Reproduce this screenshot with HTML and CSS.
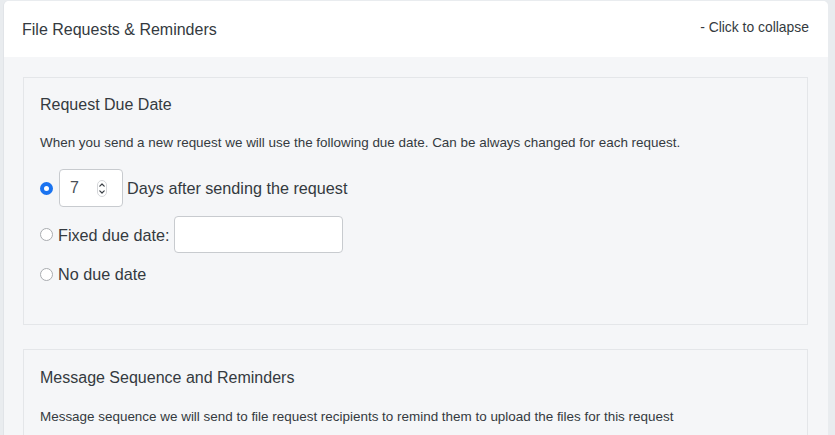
FILE: index.html
```html
<!DOCTYPE html>
<html lang="en">
<head>
    <meta charset="UTF-8">
    <meta name="viewport" content="width=device-width, initial-scale=1.0">
    <title>Settings - File Requests</title>
    <link rel="stylesheet" href="styles.css">
</head>
<body>
    <div class="card">
        <div class="card-header">
            <h2>File Requests &amp; Reminders</h2>
            <a class="collapse-link" href="#">- Click to collapse</a>
        </div>
        <div class="card-body">
            <div class="section">
                <h3>Request Due Date</h3>
                <p class="hint">When you send a new request we will use the following due date. Can be always changed for each request.</p>
                <form class="due-form">
                    <label class="option">
                        <input type="radio" name="due" checked>
                        <span class="number-box">
                            <input type="text" class="number-input" value="7">
                            <svg class="spinner" width="10" height="17" viewBox="0 0 10 17">
                                <rect x="0.5" y="0.5" width="9" height="16" rx="4.5" fill="#fff" stroke="#d4d6d9"/>
                                <path d="M2.8 6.2 L5 4 L7.2 6.2" fill="none" stroke="#3a3f45" stroke-width="1.2" stroke-linecap="round" stroke-linejoin="round"/>
                                <path d="M2.8 10.8 L5 13 L7.2 10.8" fill="none" stroke="#3a3f45" stroke-width="1.2" stroke-linecap="round" stroke-linejoin="round"/>
                            </svg>
                        </span>
                        Days after sending the request
                    </label>
                    <label class="option">
                        <input type="radio" name="due">
                        Fixed due date:
                        <input type="text" class="date-input">
                    </label>
                    <label class="option">
                        <input type="radio" name="due">
                        No due date
                    </label>
                </form>
            </div>

            <div class="section">
                <h3>Message Sequence and Reminders</h3>
                <p class="hint">Message sequence we will send to file request recipients to remind them to upload the files for this request</p>
            </div>
        </div>
    </div>
</body>
</html>
```

FILE: styles.css
```css
body {
    font-family: 'Liberation Sans', Arial, sans-serif;
    margin: 0;
    padding: 1px 7px 0 3px;
    background-color: #e9ecef;
    color: #343a40;
    overflow: hidden;
}
.card {
    background-color: #f5f6f8;
    border-radius: 5px;
    border-left: 1px solid #e1e4e8;
    min-height: 500px;
}
.card-header {
    display: flex;
    justify-content: space-between;
    align-items: center;
    height: 56px;
    padding: 0 19px 0 18px;
    background-color: #fff;
    border-radius: 5px 5px 0 0;
}
.card-header h2 {
    margin: 2px 0 0;
    font-size: 16px;
    font-weight: normal;
}
.collapse-link {
    font-size: 13.9px;
    color: #343a40;
    text-decoration: none;
    margin-bottom: 5px;
}
.card-body {
    padding: 20px 20px 0 19px;
}
.section {
    border: 1px solid #e4e6e9;
    padding: 16px 16px 40px;
    margin-bottom: 24px;
}
.section h3 {
    margin: 0;
    font-size: 16px;
    font-weight: normal;
    line-height: 22px;
}
.section + .section h3 {
    margin-top: 1px;
}
.hint {
    margin: 17px 0 0;
    font-size: 13.45px;
    line-height: 20px;
}
.section + .section .hint {
    margin-top: 18px;
}
.due-form {
    margin-top: 16px;
    display: flex;
    flex-direction: column;
    gap: 9px;
}
.option {
    display: flex;
    align-items: center;
    gap: 5px;
    font-size: 16.2px;
    line-height: 20px;
}
.option + .option + .option {
    margin-top: 2px;
}
input[type="radio"] {
    appearance: none;
    margin: 0;
    width: 13px;
    height: 13px;
    border: 1px solid #a9acb0;
    border-radius: 50%;
    background-color: #fff;
}
input[type="radio"]:checked {
    border: 4px solid #1a73f0;
}
.number-box {
    display: flex;
    align-items: center;
    justify-content: space-between;
    width: 64px;
    height: 38px;
    box-sizing: border-box;
    margin: 0 -1px 0 1px;
    padding: 0 15px 0 10px;
    background-color: #fff;
    border: 1px solid #c8cbcf;
    border-radius: 4px;
}
.number-input {
    width: 20px;
    border: none;
    padding: 0;
    font-family: inherit;
    font-size: 16px;
    color: #495057;
    outline: none;
}
.date-input {
    width: 169px;
    height: 37px;
    box-sizing: border-box;
    margin-left: -1px;
    border: 1px solid #c8cbcf;
    border-radius: 4px;
    background-color: #fff;
}
```
